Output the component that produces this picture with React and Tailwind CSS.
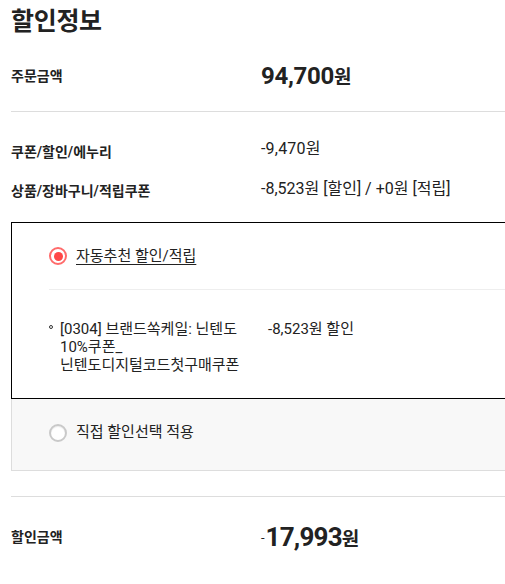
import React from "react";

const font = { fontFamily: "Roboto, 'Noto Sans CJK KR', 'Noto Sans', sans-serif" };

function Radio({ checked }) {
  if (checked) {
    return (
      <span className="flex h-[18px] w-[18px] shrink-0 items-center justify-center rounded-full border-2 border-[#ff6b6b] bg-white">
        <span className="h-[9px] w-[9px] rounded-full bg-[#ff4747]" />
      </span>
    );
  }
  return (
    <span className="h-[18px] w-[18px] shrink-0 rounded-full border-2 border-[#c9c9c9] bg-white shadow-[inset_0_1px_1px_rgba(0,0,0,0.08)]" />
  );
}

export default function App() {
  return (
    <div className="w-[505px] h-[584px] overflow-hidden bg-white text-[#222]" style={font}>
      <div className="w-[540px] pl-[11px]">
        <div className="flex h-[42px] items-center">
          <h1 className="text-[25px] font-bold leading-none tracking-[-0.3px] text-[#222]">할인정보</h1>
        </div>

        <div className="flex h-[69px] items-center pb-[2px]">
          <span className="w-[250px] text-[14px] font-semibold leading-none">주문금액</span>
          <span className="flex items-baseline font-bold leading-none text-[#222]">
            <span className="text-[24px] tracking-[-0.3px]">94,700</span>
            <span className="text-[19px]">원</span>
          </span>
        </div>

        <div className="h-px bg-[#dddddd]" />

        <div className="mt-[20px] flex h-[40px] items-center">
          <span className="w-[250px] text-[14px] font-semibold leading-none">쿠폰/할인/에누리</span>
          <span className="mb-[7px] text-[16px] leading-none tracking-[0.2px]">-9,470원</span>
        </div>
        <div className="flex h-[38px] items-center">
          <span className="w-[250px] text-[14px] font-semibold leading-none">상품/장바구니/적립쿠폰</span>
          <span className="mb-[4px] text-[16px] leading-none">-8,523원 [할인] / +0원 [적립]</span>
        </div>

        <div className="mt-[12px] border border-black">
          <div className="pl-[37px]">
            <div className="flex h-[66px] items-center gap-[9px]">
              <Radio checked />
              <span className="text-[15px] leading-none underline underline-offset-[3px]">자동추천 할인/적립</span>
            </div>
            <div className="h-px bg-[#eeeeee]" />
            <div className="flex pt-[30px] pb-[24px] text-[15px] leading-[18px]">
              <span className="mt-[5px] mr-[7px] h-[4px] w-[4px] shrink-0 rounded-full border border-[#333]" />
              <span className="w-[200px] shrink-0">
                [0304] 브랜드쏙케일: 닌텐도
                <br />
                10%쿠폰_
                <br />
                닌텐도디지털코드첫구매쿠폰
              </span>
              <span className="ml-[8px]">-8,523원 할인</span>
            </div>
          </div>
        </div>

        <div className="flex h-[72px] items-center gap-[9px] border-b border-l border-[#dddddd] bg-[#f8f8f8] pb-[4px] pl-[37px]">
          <Radio />
          <span className="text-[15px] leading-none">직접 할인선택 적용</span>
        </div>

        <div className="mt-[25px] h-px bg-[#dddddd]" />

        <div className="flex h-[80px] items-center">
          <span className="w-[250px] text-[14px] font-semibold leading-none">할인금액</span>
          <span className="flex items-center leading-none text-[#222]">
            <span className="mr-[1px] mt-[1px] text-[13px] font-normal">-</span>
            <span className="flex items-baseline font-bold">
              <span className="text-[26px] tracking-[-0.8px]">17,993</span>
              <span className="text-[19px]">원</span>
            </span>
          </span>
        </div>
      </div>
    </div>
  );
}
